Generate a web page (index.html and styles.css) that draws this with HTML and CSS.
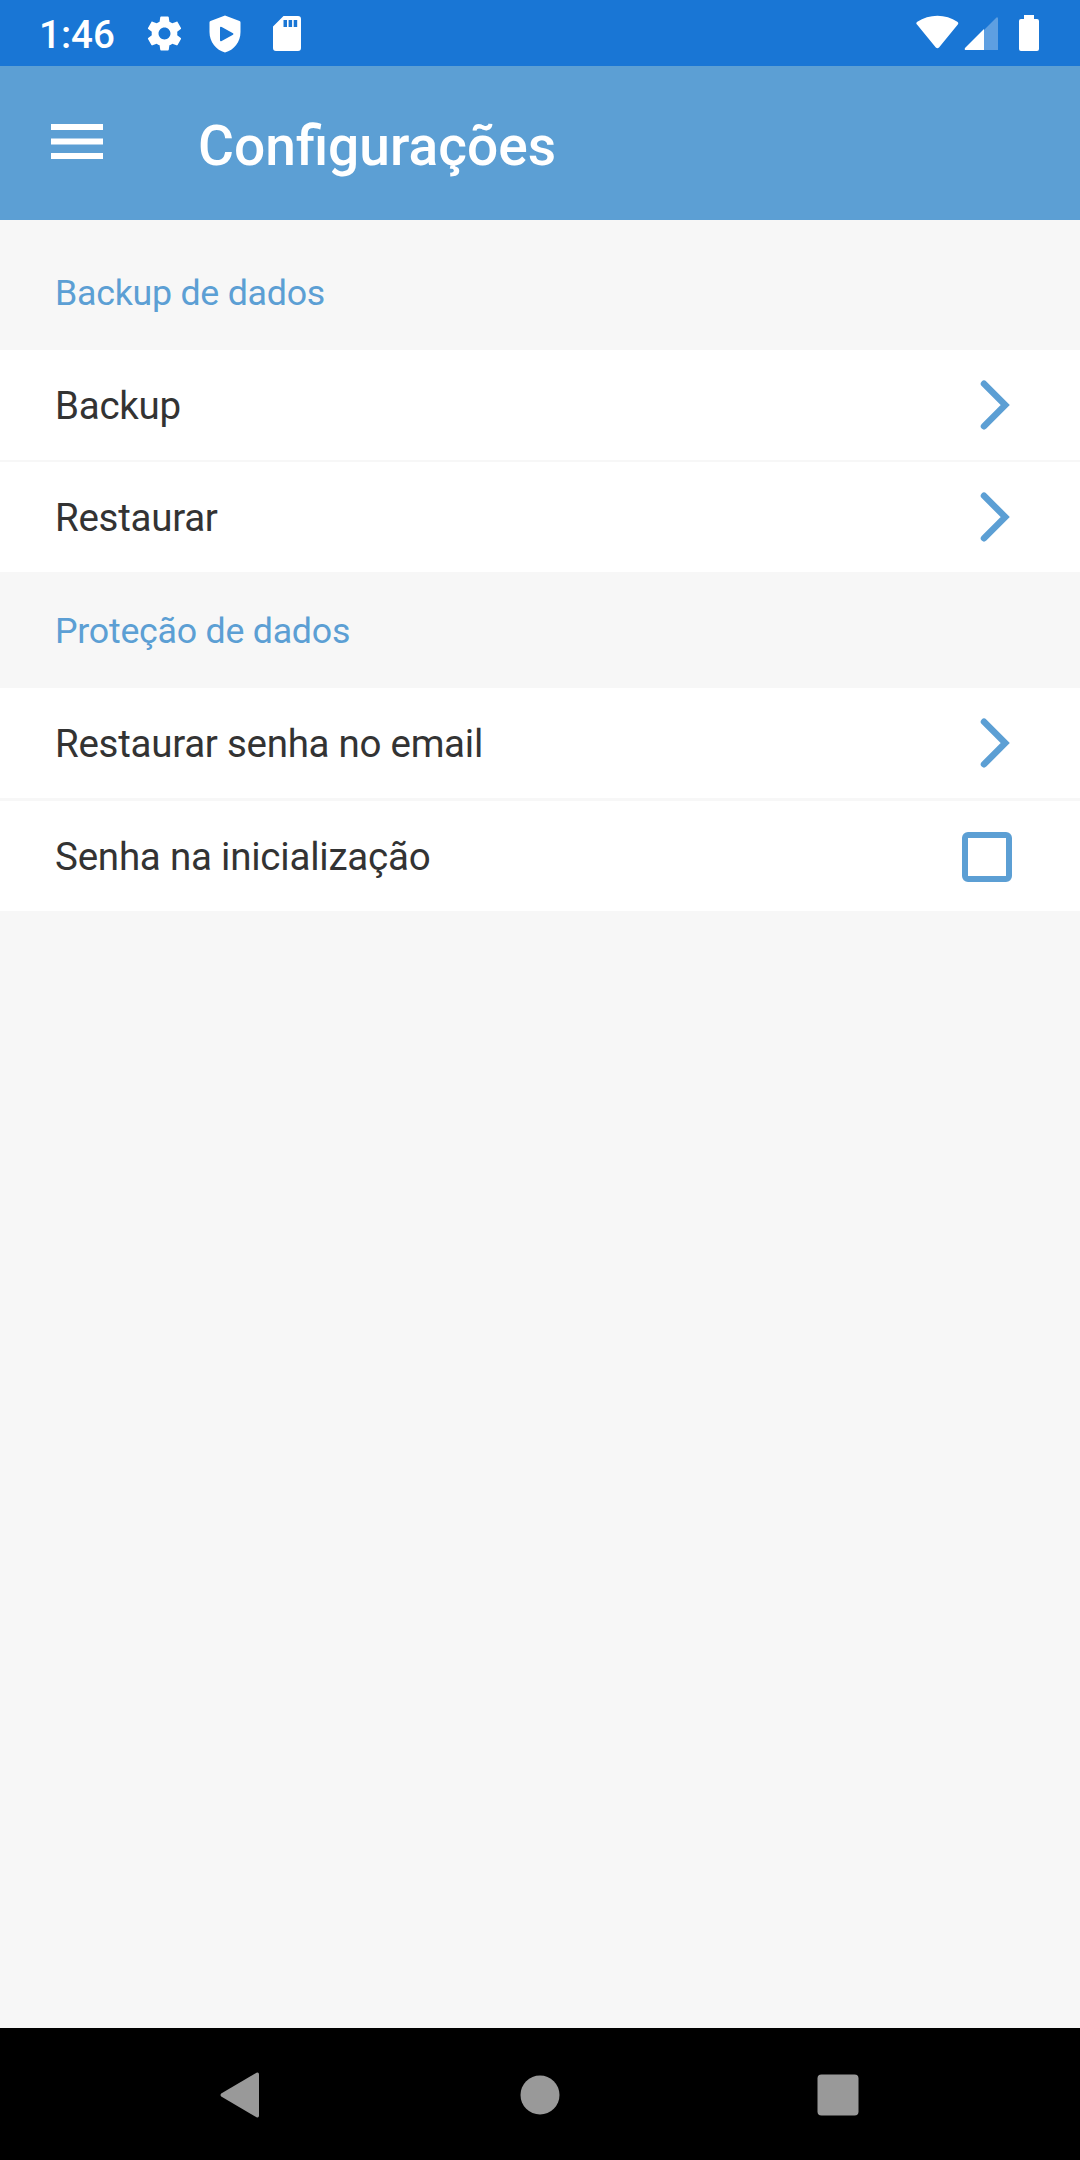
FILE: index.html
```html
<!DOCTYPE html>
<html lang="pt-BR">
<head>
<meta charset="utf-8">
<title>Configurações</title>
<link rel="stylesheet" href="styles.css">
</head>
<body>
<header class="status-bar">
  <span class="clock">1:46</span>
  <svg class="status-icon" viewBox="0 0 24 24"><path d="M19.43 12.98c.04-.32.07-.64.07-.98s-.03-.66-.07-.98l2.11-1.65c.19-.15.24-.42.12-.64l-2-3.46c-.12-.22-.39-.3-.61-.22l-2.49 1c-.52-.4-1.08-.73-1.69-.98l-.38-2.65C14.46 2.18 14.25 2 14 2h-4c-.25 0-.46.18-.49.42l-.38 2.65c-.61.25-1.17.59-1.69.98l-2.49-1c-.23-.09-.49 0-.61.22l-2 3.46c-.13.22-.07.49.12.64l2.11 1.65c-.04.32-.07.65-.07.98s.03.66.07.98l-2.11 1.65c-.19.15-.24.42-.12.64l2 3.46c.12.22.39.3.61.22l2.49-1c.52.4 1.08.73 1.69.98l.38 2.65c.03.24.24.42.49.42h4c.25 0 .46-.18.49-.42l.38-2.65c.61-.25 1.17-.59 1.69-.98l2.49 1c.23.09.49 0 .61-.22l2-3.46c.12-.22.07-.49-.12-.64l-2.11-1.65zM12 15.5c-1.93 0-3.5-1.57-3.5-3.5s1.57-3.5 3.5-3.5 3.500 1.570 3.500 3.500-1.570 3.500-3.500 3.500z"/></svg>
  <svg class="status-icon status-shield" viewBox="0 0 32 38"><path fill-rule="evenodd" d="M16 .5 30.500 6Q31.500 6.400 31.500 7.500V17C31.500 27 25 35 16 37.500 7 35 .5 27 .5 17V7.500Q.5 6.400 1.500 6ZM11 13V25Q11 27 12.700 26L24 19.800Q25 19 24 18.200L12.700 12Q11 11 11 13Z"/></svg>
  <svg class="status-icon status-card" viewBox="0 0 28 35"><path fill-rule="evenodd" d="M10.500 0H25Q28 0 28 3V32Q28 35 25 35H3Q0 35 0 32V10.500ZM10.500 4V11H14V4ZM15.600 4V11H19.100V4ZM20.700 4V11H24.200V4Z"/></svg>
  <svg class="status-signals" viewBox="0 0 124 38">
    <path d="M1 9.500Q-.5 8 1.300 6.800C13-1.300 30-1.300 41.300 6.800Q43 8 41.800 9.500L23 32.500Q21.400 34 19.800 32.500Z"/>
    <path opacity=".3" d="M68 15 79.500 3.500Q82 1 82 4V35H68Z"/>
    <path d="M68 14V35H50Q48 35 49 33Z"/>
    <path d="M108 0H118V4H121Q123 4 123 6V34Q123 36 121 36H105Q103 36 103 34V6Q103 4 105 4H108Z"/>
  </svg>
</header>
<div class="app-bar">
  <svg class="menu-icon" viewBox="0 0 52 36"><path d="M0 0H52V6H0ZM0 14.500H52V20.500H0ZM0 29H52V35H0Z"/></svg>
  <h1 class="title">Configurações</h1>
</div>
<main class="settings">
  <h2 class="section">Backup de dados</h2>
  <ul class="list">
    <li class="row">Backup<svg class="chevron" viewBox="0 0 30 50"><path d="M4 3.700 25.200 25 4 46.300"/></svg></li>
    <li class="row">Restaurar<svg class="chevron" viewBox="0 0 30 50"><path d="M4 3.700 25.200 25 4 46.300"/></svg></li>
  </ul>
  <h2 class="section">Proteção de dados</h2>
  <ul class="list list-wide">
    <li class="row">Restaurar senha no email<svg class="chevron" viewBox="0 0 30 50"><path d="M4 3.700 25.200 25 4 46.300"/></svg></li>
    <li class="row row-check">Senha na inicialização<span class="checkbox"></span></li>
  </ul>
</main>
<nav class="nav-bar">
  <svg class="nav-icon" viewBox="0 0 46 46"><path d="M2.200 21.500 37.500 .8Q40 0 40 2.500V43.500Q40 46 37.500 45.200L2.200 24.500Q.8 23 2.200 21.500Z"/></svg>
  <svg class="nav-icon" viewBox="0 0 46 46"><circle cx="23" cy="23" r="19.500"/></svg>
  <svg class="nav-icon" viewBox="0 0 46 46"><rect x="2.500" y="2.500" width="41" height="41" rx="4"/></svg>
</nav>
</body>
</html>
```
FILE: styles.css
```css
* { box-sizing: border-box; }
body {
  margin: 0;
  height: 2160px;
  display: flex;
  flex-direction: column;
  background: #f7f7f7;
  font-family: Roboto, sans-serif;
  color: #333;
}
h1, h2, ul { margin: 0; padding: 0; list-style: none; font-weight: 400; }
svg { display: block; flex: none; }

.status-bar {
  height: 66px;
  display: flex;
  align-items: center;
  padding: 1px 40px 0 39px;
  background: #1976d5;
  color: #fff;
  fill: #fff;
}
.clock { width: 105px; font-size: 38.5px; font-weight: 500; padding-top: 1px; }
.status-icon { width: 41px; height: 41px; }
.status-shield { width: 32px; height: 38px; margin-left: 24px; }
.status-card { width: 28px; height: 35px; margin-left: 32px; }
.status-signals { width: 124px; height: 38px; margin: 1px 0 0 auto; }

.app-bar {
  height: 154px;
  display: flex;
  align-items: center;
  padding-left: 51px;
  background: #5c9fd4;
  color: #fff;
}
.menu-icon { width: 52px; height: 36px; fill: #fff; margin-bottom: 2px; }
.title { margin-left: 95px; padding-top: 5px; font-size: 55.1px; font-weight: 500; }

.settings { flex: 1; padding-top: 14px; }
.section {
  height: 116px;
  display: flex;
  align-items: center;
  padding: 1px 55px 0;
  font-size: 35.75px;
  letter-spacing: -.25px;
  color: #5c9fd4;
}
.list { display: flex; flex-direction: column; gap: 2px; }
.list-wide { gap: 3px; }
.row {
  height: 110px;
  display: flex;
  align-items: center;
  justify-content: space-between;
  padding: 0 68px 0 55px;
  background: #fff;
  font-size: 38.5px;
  letter-spacing: -.27px;
}
.row-check { letter-spacing: -.22px; }
.chevron { width: 30px; height: 50px; margin-right: 2px; fill: none; stroke: #5c9fd4; stroke-width: 6.5; stroke-linecap: round; }
.checkbox { width: 50px; height: 50px; margin-top: 2px; border: 6px solid #5c9fd4; border-radius: 6px; }

.nav-bar {
  height: 132px;
  display: flex;
  align-items: center;
  justify-content: space-between;
  padding: 1px 219px 0;
  background: #000;
  fill: #999;
}
.nav-icon { width: 46px; height: 46px; }
```
